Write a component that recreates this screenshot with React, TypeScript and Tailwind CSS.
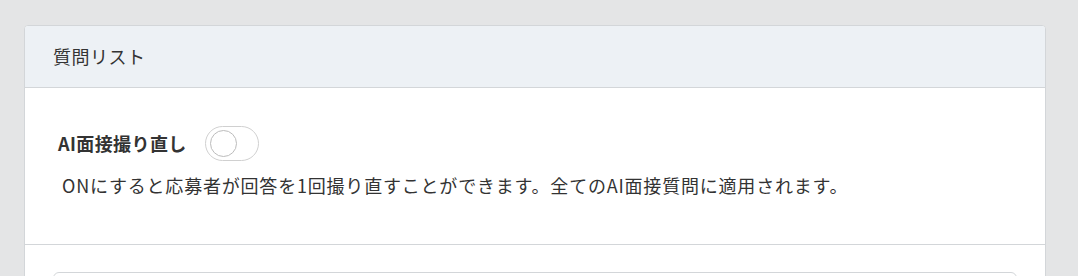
import React, { useState } from 'react';

const font = { fontFamily: '"Noto Sans CJK JP", "Noto Sans", sans-serif' };

export default function App() {
  const [retake, setRetake] = useState(false);

  return (
    <div className="min-h-screen bg-[#e4e5e6] pt-[25px] pl-[24px] pr-[32px] text-[#333]" style={font}>
      <div className="bg-white border border-[#d3d6d9] rounded-[4px] overflow-hidden">
        {/* Header */}
        <div className="h-[62px] bg-[#edf1f5] border-b border-[#d3d6d9] flex items-center pl-[28px]">
          <h2 className="text-[18px] text-[#333] tracking-[0.5px]">質問リスト</h2>
        </div>

        {/* Retake setting */}
        <div className="pl-[33px] pt-[37px] pb-[47px]">
          <div className="flex items-center h-[36px]">
            <span className="text-[18px] font-bold tracking-[0.4px]">AI面接撮り直し</span>
            <button
              onClick={() => setRetake(!retake)}
              className={`ml-[18px] w-[54px] h-[35px] rounded-full border border-[#d0d0d0] flex items-center px-[4px] ${
                retake ? 'bg-[#3b82f6] justify-end' : 'bg-white justify-start'
              }`}
            >
              <span className="w-[27px] h-[27px] rounded-full border border-[#bcbcbc] bg-white" />
            </button>
          </div>
          <p className="mt-[12px] pl-[4px] text-[18px] leading-[24px] tracking-[0.8px]">
            ONにすると応募者が回答を1回撮り直すことができます。全てのAI面接質問に適用されます。
          </p>
        </div>

        {/* Question list */}
        <div className="border-t border-[#d3d6d9] px-[28px] pt-[27px] pb-[20px]">
          <div className="h-[80px] border border-[#d3d6d9] rounded-[6px]" />
        </div>
      </div>
    </div>
  );
}
